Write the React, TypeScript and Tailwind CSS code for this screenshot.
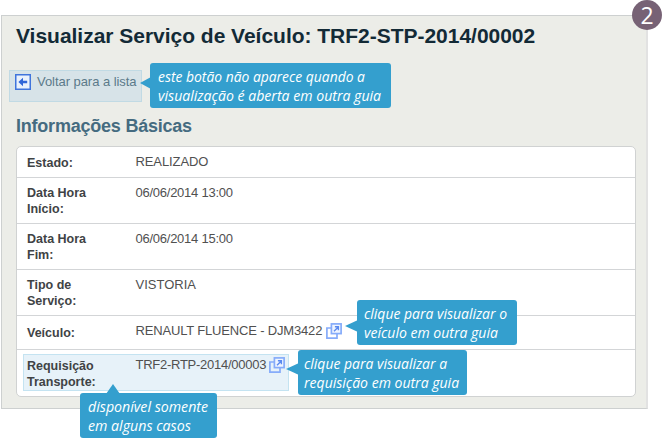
import type { ReactNode } from 'react';

function OpenIcon() {
  return (
    <svg width="16" height="16" viewBox="0 0 16 16" className="block shrink-0" fill="none">
      <path d="M5 5H0.9V15.1H11V11" stroke="#86acfa" strokeWidth="1.7" />
      <rect x="5.4" y="0.9" width="9.7" height="9.7" fill="#eff5ff" stroke="#86acfa" strokeWidth="1.7" />
      <path d="M8 8.2L11.8 4.4M8.9 3.7H12.4V7.2" stroke="#5b8af0" strokeWidth="1.4" />
    </svg>
  );
}

function BackIcon() {
  return (
    <svg width="16" height="16" viewBox="0 0 16 16" className="block shrink-0">
      <rect x="0.75" y="0.75" width="14.5" height="14.5" fill="#e9f1fc" stroke="#3f74dc" strokeWidth="1.5" />
      <path d="M3.4 8L8 3.8V6.7H12.2V9.3H8V12.2Z" fill="#2f66d8" />
    </svg>
  );
}

interface RowProps {
  label: ReactNode;
  height: string;
  children: ReactNode;
  labelOffset?: string;
  highlighted?: boolean;
}

function Row({ label, height, children, labelOffset = '', highlighted = false }: RowProps) {
  return (
    <div className={`relative flex pl-[10px] pt-[8px] ${height} ${highlighted ? '' : 'border-b border-[#d3d5d7]'}`}>
      {highlighted && <span className="absolute left-[6px] top-[4px] h-[37px] w-[266px] border border-[#c4e3f1] bg-[#e7f2f9]" />}
      <div className={`relative w-[108.5px] shrink-0 text-[12.5px] font-bold leading-[16px] text-[#404345] ${labelOffset}`}>{label}</div>
      <div className="relative flex h-[14px] items-center whitespace-nowrap text-[13px] leading-[14px] text-[#505050]">{children}</div>
    </div>
  );
}

interface CalloutProps {
  box: string;
  tip: string;
  points: string;
  lines: [string, string][];
}

function Callout({ box, tip, points, lines }: CalloutProps) {
  return (
    <div className={`absolute rounded-[3px] bg-[#349fce] pt-[4px] font-['Open_Sans','Noto_Sans',sans-serif] text-[15px] italic leading-[19px] text-white ${box}`}>
      <svg className={`absolute ${tip}`} width="14" height="14" viewBox="0 0 14 14">
        <polygon points={points} fill="#349fce" />
      </svg>
      {lines.map(([text, scale]) => (
        <div key={text} className={`w-max origin-left whitespace-nowrap ${scale}`}>{text}</div>
      ))}
    </div>
  );
}

export default function App() {
  return (
    <div className="relative h-[441px] w-[662px] overflow-hidden bg-white pl-px pt-[15px] font-['Liberation_Sans',Arial,sans-serif]">
      <main className="h-[394px] w-[647px] border border-r-2 border-[#cdd0d0] border-r-[#e2e2e2] bg-[#ecede8] pl-[14px]">
        <h1 className="w-max whitespace-nowrap pt-[7px] text-[21px] font-bold leading-[26px] tracking-[-0.02px] text-[#132a36]">
          Visualizar Serviço de Veículo: TRF2-STP-2014/00002
        </h1>
        <button className="-ml-[7px] mt-[21px] flex h-[32px] w-[133px] items-start border border-[#c1dae4] bg-[#d7e3e8] pl-[5px] pt-[3px] text-[13px] leading-[16px] tracking-[-0.05px] text-[#5b7a8a]">
          <BackIcon />
          <span className="ml-[6px] whitespace-nowrap">Voltar para a lista</span>
        </button>
        <h2 className="mt-[13px] h-[31px] whitespace-nowrap text-[18px] font-bold leading-[22px] tracking-[-0.22px] text-[#456b80]">
          Informações Básicas
        </h2>
        <section className="h-[251px] w-[620px] rounded-[5px] border border-[#d0d2d2] bg-white">
          <Row label="Estado:" height="h-[31px]"><span className="tracking-[-0.1px]">REALIZADO</span></Row>
          <Row label={<>Data Hora<br />Início:</>} height="h-[46px]" labelOffset="-top-px"><span className="tracking-[-0.25px]">06/06/2014 13:00</span></Row>
          <Row label={<>Data Hora<br />Fim:</>} height="h-[46px]" labelOffset="-top-px"><span className="tracking-[-0.25px]">06/06/2014 15:00</span></Row>
          <Row label={<>Tipo de<br />Serviço:</>} height="h-[46px]" labelOffset="-top-px">VISTORIA</Row>
          <Row label="Veículo:" height="h-[34px]" labelOffset="top-px">
            <span className="tracking-[-0.17px]">RENAULT FLUENCE - DJM3422</span>
            <span className="ml-[4px]"><OpenIcon /></span>
          </Row>
          <Row label={<>Requisição<br />Transporte:</>} height="h-[46px]" highlighted>
            <span className="tracking-[-0.26px]">TRF2-RTP-2014/00003</span>
            <span className="ml-[3px]"><OpenIcon /></span>
          </Row>
        </section>
      </main>
      <Callout box="left-[150px] top-[63px] h-[45px] w-[241px] pl-[8px]" tip="-left-[10px] top-[13px]" points="0,7 11,1 11,13"
        lines={[['este botão não aparece quando a', 'scale-x-[0.925]'], ['visualização é aberta em outra guia', 'scale-x-[0.94]']]} />
      <Callout box="left-[357px] top-[300px] h-[45px] w-[160px] pl-[7px]" tip="-left-[12px] top-[19px]" points="0,7 13,1 13,13"
        lines={[['clique para visualizar o', 'scale-x-[0.93]'], ['veículo em outra guia', 'scale-x-[0.935]']]} />
      <Callout box="left-[298px] top-[350px] h-[45px] w-[169px] pl-[6px]" tip="-left-[12px] top-[12px]" points="0,7 13,1 13,13"
        lines={[['clique para visualizar a', 'scale-x-[0.93]'], ['requisição em outra guia', 'scale-x-[0.935]']]} />
      <Callout box="left-[80px] top-[393px] h-[45px] w-[137px] pl-[8px]" tip="left-[26px] -top-[9px]" points="7,0 0,10 14,10"
        lines={[['disponível somente', 'scale-x-[0.945]'], ['em alguns casos', 'scale-x-[0.945]']]} />
      <div className="absolute left-[632px] top-0 flex h-[30px] w-[30px] items-center justify-center rounded-full bg-[#776275] pt-px font-['Open_Sans','Noto_Sans',sans-serif] text-[23px] leading-none text-white">2</div>
    </div>
  );
}
